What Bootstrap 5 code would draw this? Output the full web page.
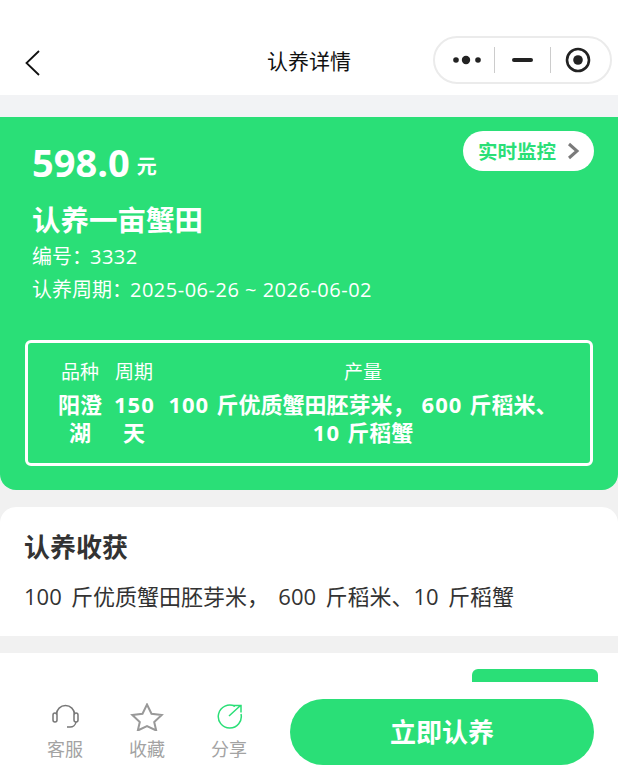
<!DOCTYPE html>
<html lang="zh-CN">
<head>
    <meta charset="UTF-8">
    <title>认养详情</title>
    <link href="https://cdn.jsdelivr.net/npm/bootstrap@5.3.3/dist/css/bootstrap.min.css" rel="stylesheet">
    <style>
        body { font-family: "Open Sans", "Noto Sans CJK SC", sans-serif; background: #f1f1f1; color: #333; }
        .phone-page { position: relative; width: 618px; height: 780px; overflow: hidden; }
        .top-bar { height: 95px; padding: 36px 6px 0 24px; }
        .top-gap { height: 22px; background: #f2f3f5; }
        .back-icon { margin-top: 14px; }
        .page-title { font-size: 21px; line-height: 50px; color: #111; left: 0; right: 0; top: 36px; position: absolute; text-align: center; }
        .capsule { margin-left: auto; width: 179px; height: 48px; border: 2px solid #ebebeb; border-radius: 24px; padding-left: 18px; }
        .capsule-sep { width: 1px; height: 26px; background: #ccc; }
        .sep-one { margin: 0 17px 0 11px; }
        .sep-two { margin: 0 14px 0 17px; }
        .hero-panel { height: 373px; background: #2adf77; border-radius: 0 0 16px 16px; color: #fff; padding: 20px 25px 0 25px; position: relative; }
        .price-num { font-size: 38px; font-weight: 700; line-height: 50px; }
        .price-unit { font-size: 20px; font-weight: 700; margin-left: 7px; vertical-align: 3px; }
        .price-line { padding-left: 7px; }
        .hero-name { font-size: 28.500px; font-weight: 700; line-height: 40px; padding-left: 7px; margin-top: 13px; }
        .hero-meta { font-size: 20px; line-height: 33px; padding-left: 7px; }
        .meta-num { letter-spacing: .5px; margin-left: -2px; }
        .monitor-btn { position: absolute; top: 14px; right: 24px; width: 131px; height: 40px; border-radius: 20px; background: #fff; color: #2adf77; font-size: 19.500px; font-weight: 700; padding: 2px 0 0 15px; }
        .monitor-arrow { margin-left: 11px; margin-top: -2px; }
        .spec-box { border: 3px solid #fff; border-radius: 6px; height: 126px; margin-top: 34px; padding: 16px 0 0 30px; gap: 12px; text-align: center; }
        .spec-label { font-size: 19px; line-height: 26px; }
        .spec-value { font-size: 22px; font-weight: 700; line-height: 28px; margin-top: 5px; word-spacing: 1.500px; white-space: nowrap; }
        .num-wide { letter-spacing: 1px; }
        .spec-a { width: 44px; }
        .spec-b { width: 40px; }
        .spec-c { width: 394px; }
        .harvest-card { margin-top: 17px; height: 129px; background: #fff; border-radius: 16px 16px 0 0; padding: 22px 24px 0; }
        .harvest-title { font-size: 26px; font-weight: 700; line-height: 36px; color: #333; }
        .harvest-text { font-size: 22px; line-height: 34px; margin-top: 14px; color: #333; word-spacing: 3.600px; }
        .next-card { margin-top: 17px; height: 127px; background: #fff; padding: 16px 20px 0 0; }
        .next-tag { width: 126px; height: 13px; background: #2adf77; border-radius: 6px 6px 0 0; margin-left: auto; }
        .action-bar { position: absolute; left: 0; right: 0; bottom: 0; height: 98px; background: #fff; padding: 17px 24px 0 24px; }
        .action-item { width: 82px; margin-top: 4px; color: #a3a3a3; font-size: 18px; line-height: 24px; text-align: center; }
        .action-item svg { display: block; margin: 0 auto 6px; }
        .adopt-btn { margin-left: auto; width: 304px; height: 66px; border-radius: 33px; background: #2adf77; color: #fff; font-size: 26px; font-weight: 700; border: 0; }
    </style>
</head>
<body>
<div class="phone-page">
    <div class="top-bar bg-white d-flex align-items-start">
        <svg class="back-icon" width="16" height="26" viewBox="0 0 16 26"><path d="M15 1 2.500 13 15 25" fill="none" stroke="#111" stroke-width="1.800"/></svg>
        <div class="page-title">认养详情</div>
        <div class="capsule d-flex align-items-center">
            <svg width="30" height="12" viewBox="0 0 30 12"><circle cx="3" cy="6" r="2.800" fill="#222"/><circle cx="13" cy="6" r="4.200" fill="#222"/><circle cx="25" cy="6" r="2.800" fill="#222"/></svg>
            <div class="capsule-sep sep-one"></div>
            <svg width="21" height="6" viewBox="0 0 21 6"><rect y="1" width="21" height="4" rx="2" fill="#222"/></svg>
            <div class="capsule-sep sep-two"></div>
            <svg width="26" height="26" viewBox="0 0 26 26"><circle cx="13" cy="13" r="11" fill="none" stroke="#222" stroke-width="2.600"/><circle cx="13" cy="13" r="4.800" fill="#222"/></svg>
        </div>
    </div>
    <div class="top-gap"></div>

    <div class="hero-panel">
        <div class="price-line"><span class="price-num">598.0</span><span class="price-unit">元</span></div>
        <div class="hero-name">认养一亩蟹田</div>
        <div class="hero-meta">编号：<span class="meta-num">3332</span></div>
        <div class="hero-meta">认养周期：<span class="meta-num">2025-06-26 ~ 2026-06-02</span></div>
        <div class="monitor-btn d-flex align-items-center">
            <span>实时监控</span>
            <svg class="monitor-arrow" width="13" height="18" viewBox="0 0 13 18"><path d="M2 2 10 9 2 16" fill="none" stroke="#7a7a7a" stroke-width="3"/></svg>
        </div>
        <div class="spec-box d-flex">
            <div class="spec-a"><div class="spec-label">品种</div><div class="spec-value">阳澄<br>湖</div></div>
            <div class="spec-b"><div class="spec-label">周期</div><div class="spec-value"><span class="num-wide">150</span><br>天</div></div>
            <div class="spec-c"><div class="spec-label">产量</div><div class="spec-value"><span class="num-wide">100</span> 斤优质蟹田胚芽米， <span class="num-wide">600</span> 斤稻米、<br><span class="num-wide">10</span> 斤稻蟹</div></div>
        </div>
    </div>

    <div class="harvest-card">
        <div class="harvest-title">认养收获</div>
        <div class="harvest-text">100 斤优质蟹田胚芽米， 600 斤稻米、10 斤稻蟹</div>
    </div>

    <div class="next-card"><div class="next-tag"></div></div>

    <div class="action-bar d-flex align-items-start">
        <div class="action-item">
            <svg width="28" height="28" viewBox="0 0 28 28"><path d="M5.500 10V11.500a9 9 0 0 1 18 0V10M25 19a6 6 0 0 1-6 5h-3" fill="none" stroke="#777" stroke-width="1.500"/><rect x="2" y="10" width="4" height="9" rx="2" fill="none" stroke="#777" stroke-width="1.500"/><rect x="23" y="10" width="4" height="9" rx="2" fill="none" stroke="#777" stroke-width="1.500"/></svg>
            客服
        </div>
        <div class="action-item">
            <svg width="34" height="28" viewBox="0 0 34 28"><path d="m17 1.500 4.500 9.300 10.200 1.200-7.500 7 2 8.500-9.200-4.500-9.200 4.500 2-8.500-7.500-7 10.200-1.200Z" fill="none" stroke="#999" stroke-width="2"/></svg>
            收藏
        </div>
        <div class="action-item">
            <svg width="28" height="28" viewBox="0 0 28 28"><path d="M20 3.300A11.500 11.500 0 1 0 26 11" fill="none" stroke="#2adf77" stroke-width="1.500"/><path d="M14 13 25.500 2.500M18 2.500h8v7" fill="none" stroke="#2adf77" stroke-width="1.500"/></svg>
            分享
        </div>
        <button type="button" class="adopt-btn">立即认养</button>
    </div>
</div>
<script src="https://cdn.jsdelivr.net/npm/bootstrap@5.3.3/dist/js/bootstrap.bundle.min.js"></script>
</body>
</html>
